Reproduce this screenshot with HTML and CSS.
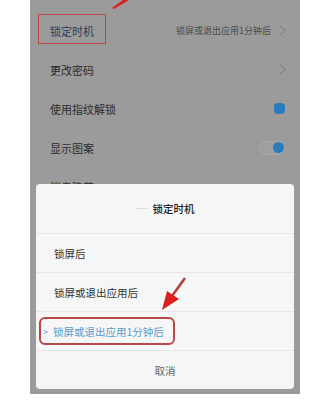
FILE: index.html
```html
<!DOCTYPE html>
<html lang="zh-CN">
<head>
  <meta charset="UTF-8" />
  <meta name="viewport" content="width=device-width, initial-scale=1.0" />
  <title>锁定时机</title>
  <link rel="stylesheet" href="styles.css">
</head>
<body>

<div class="phone">

  <!-- 设置列表 -->
  <div class="settings">
    <div class="row">
      <span class="label label-first">锁定时机</span>
      <span class="value">锁屏或退出应用1分钟后</span>
      <svg class="chev" width="7" height="11" viewBox="0 0 7 11"><polyline points="1,1 6,5.5 1,10" fill="none" stroke="#7a7a7a" stroke-width="1"/></svg>
    </div>
    <div class="row">
      <span class="label">更改密码</span>
      <svg class="chev" width="7" height="11" viewBox="0 0 7 11"><polyline points="1,1 6,5.5 1,10" fill="none" stroke="#7a7a7a" stroke-width="1"/></svg>
    </div>
    <div class="row">
      <span class="label">使用指纹解锁</span>
      <span class="dot dot-plain"></span>
    </div>
    <div class="row">
      <span class="label">显示图案</span>
      <span class="toggle"><span class="dot"></span></span>
    </div>
    <div class="row">
      <span class="label">消息隐藏</span>
    </div>
  </div>

  <!-- 红框和箭头 -->
  <div class="mark-top"></div>
  <svg class="arrow-top" width="20" height="10" viewBox="0 0 20 10">
    <polygon points="19,0 13,0 2,8 4,9" fill="#d8201c"/>
  </svg>

  <!-- 弹出对话框 -->
  <div class="dialog">
    <div class="dialog-title"><span class="ghost"></span>锁定时机</div>
    <div class="option">锁屏后</div>
    <div class="option">锁屏或退出应用后</div>
    <div class="option option-on">
      <span class="tick">&gt;</span>锁屏或退出应用1分钟后
      <div class="mark-opt"></div>
    </div>
    <div class="cancel">取消</div>

    <svg class="arrow-dlg" width="30" height="36" viewBox="0 0 30 36">
      <line x1="27" y1="2" x2="14" y2="20" stroke="#b83a3a" stroke-width="2.5"/>
      <polygon points="9,15 21,23 4,34" fill="#d8201c"/>
    </svg>
  </div>

</div>

</body>
</html>
```

FILE: styles.css
```css
body {
  margin: 0;
  background: #ffffff;
  font-family: "Noto Sans CJK SC", "Noto Sans", sans-serif;
}

.phone {
  position: relative;
  width: 270px;
  height: 394px;
  margin-left: 30px;
  background: #9b9b9b;
  overflow: hidden;
}

.settings {
  padding-top: 11px;
}

.row {
  height: 39px;
  display: flex;
  align-items: center;
  padding: 0 14px 0 20px;
}

.label {
  flex: 1;
  font-size: 11px;
  color: #2c2c2c;
}

.label-first {
  color: #333a55;
}

.value {
  font-size: 9px;
  color: #4a4a4a;
  margin-right: 8px;
}

.chev {
  display: block;
}

.dot {
  display: block;
  width: 11px;
  height: 11px;
  border-radius: 50%;
  background: #2a7cbc;
}

.dot-plain {
  margin-right: 1px;
  border-radius: 4px;
}

.toggle {
  display: flex;
  align-items: center;
  justify-content: flex-end;
  width: 24px;
  height: 12px;
  border: 1px solid #a8a8a8;
  border-radius: 7px;
  background: #9f9f9f;
  margin-right: 1px;
}

.mark-top {
  position: absolute;
  left: 8px;
  top: 14px;
  width: 66px;
  height: 28px;
  border: 1px solid #c04545;
}

.arrow-top {
  position: absolute;
  left: 80px;
  top: 0;
}

.dialog {
  position: absolute;
  left: 6px;
  top: 184px;
  width: 258px;
  height: 205px;
  background: #f6f6f6;
  border-radius: 4px;
  display: flex;
  flex-direction: column;
}

.dialog-title {
  height: 49px;
  display: flex;
  align-items: center;
  justify-content: center;
  font-size: 10.5px;
  font-weight: 500;
  color: #222;
  border-bottom: 1px solid #e6e6e6;
}

.ghost {
  width: 12px;
  height: 1px;
  background: #dcdcdc;
  margin-right: 5px;
}

.option {
  position: relative;
  height: 38px;
  display: flex;
  align-items: center;
  padding-left: 18px;
  font-size: 10.5px;
  color: #333;
  border-bottom: 1px solid #e6e6e6;
}

.option-on {
  padding-left: 7px;
  color: #5a9ccc;
}

.tick {
  font-size: 9px;
  margin-right: 5px;
}

.mark-opt {
  position: absolute;
  left: 3px;
  top: 5px;
  width: 132px;
  height: 24px;
  border: 2px solid #b94848;
  border-radius: 6px;
}

.cancel {
  flex: 1;
  display: flex;
  align-items: center;
  justify-content: center;
  font-size: 10.5px;
  color: #666;
}

.arrow-dlg {
  position: absolute;
  left: 122px;
  top: 92px;
}
```
